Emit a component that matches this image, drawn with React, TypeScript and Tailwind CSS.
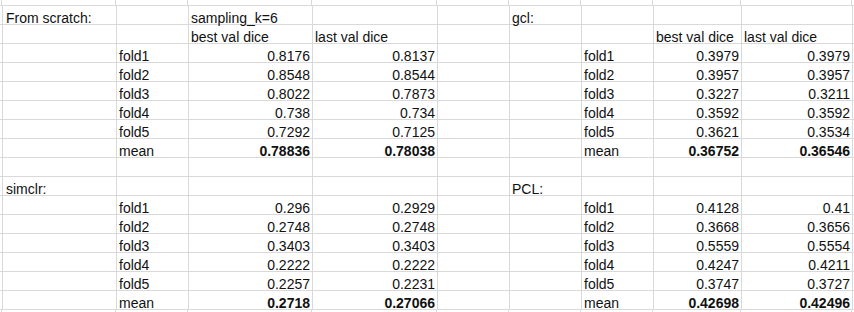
import React from 'react'

type Cell = string | number

// column widths, first one is the sliver of the column left of A
const colWidths = [
  'w-[2px]',
  'w-[114px]',
  'w-[72px]',
  'w-[124px]',
  'w-[125px]',
  'w-[72px]',
  'w-[72px]',
  'w-[72px]',
  'w-[88px]',
  'w-[111px]',
]

const foldRow = (fold: string, l: [number, number] | null, r: [number, number] | null): Cell[] => [
  '',
  '',
  fold,
  l ? l[0] : '',
  l ? l[1] : '',
  '',
  '',
  fold,
  r ? r[0] : '',
  r ? r[1] : '',
]

const rows: { cells: Cell[]; bold?: boolean }[] = [
  { cells: ['', 'From scratch:', '', 'sampling_k=6', '', '', 'gcl:', '', '', ''] },
  { cells: ['', '', '', 'best val dice', 'last val dice', '', '', '', 'best val dice', 'last val dice'] },
  { cells: foldRow('fold1', [0.8176, 0.8137], [0.3979, 0.3979]) },
  { cells: foldRow('fold2', [0.8548, 0.8544], [0.3957, 0.3957]) },
  { cells: foldRow('fold3', [0.8022, 0.7873], [0.3227, 0.3211]) },
  { cells: foldRow('fold4', [0.738, 0.734], [0.3592, 0.3592]) },
  { cells: foldRow('fold5', [0.7292, 0.7125], [0.3621, 0.3534]) },
  { cells: foldRow('mean', [0.78836, 0.78038], [0.36752, 0.36546]), bold: true },
  { cells: ['', '', '', '', '', '', '', '', '', ''] },
  { cells: ['', 'simclr:', '', '', '', '', 'PCL:', '', '', ''] },
  { cells: foldRow('fold1', [0.296, 0.2929], [0.4128, 0.41]) },
  { cells: foldRow('fold2', [0.2748, 0.2748], [0.3668, 0.3656]) },
  { cells: foldRow('fold3', [0.3403, 0.3403], [0.5559, 0.5554]) },
  { cells: foldRow('fold4', [0.2222, 0.2222], [0.4247, 0.4211]) },
  { cells: foldRow('fold5', [0.2257, 0.2231], [0.3747, 0.3727]) },
  { cells: foldRow('mean', [0.2718, 0.27066], [0.42698, 0.42496]), bold: true },
]

const EmptyRow = ({ h }: { h: string }) => (
  <div className={`flex shrink-0 ${h}`}>
    {colWidths.map((w, i) => (
      <div key={i} className={`${w} shrink-0 border-r border-b border-[#d9d9d9]`} />
    ))}
    <div className="flex-1 border-b border-[#d9d9d9]" />
  </div>
)

export default function App() {
  return (
    <div
      className="w-[854px] h-[312px] overflow-hidden bg-white text-[14px] text-[#111] flex flex-col"
      style={{ fontFamily: '"Liberation Sans", Arial, sans-serif' }}
    >
      <EmptyRow h="h-[6px]" />
      {rows.map((row, r) => (
        <div key={r} className="flex shrink-0 h-[19px]">
          {row.cells.map((c, i) => {
            const num = typeof c === 'number'
            return (
              <div
                key={i}
                className={`${colWidths[i]} shrink-0 h-[19px] leading-[24px] whitespace-nowrap border-r border-b border-[#d9d9d9] ${
                  num ? 'text-right pr-[2px]' : 'text-left pl-[2px]'
                } ${num && row.bold ? 'font-bold' : ''} ${i === 1 ? 'pl-[3px]' : ''}`}
              >
                {c === '' ? '' : String(c)}
              </div>
            )
          })}
          <div className="flex-1 border-b border-[#d9d9d9]" />
        </div>
      ))}
      <EmptyRow h="h-[19px]" />
    </div>
  )
}
